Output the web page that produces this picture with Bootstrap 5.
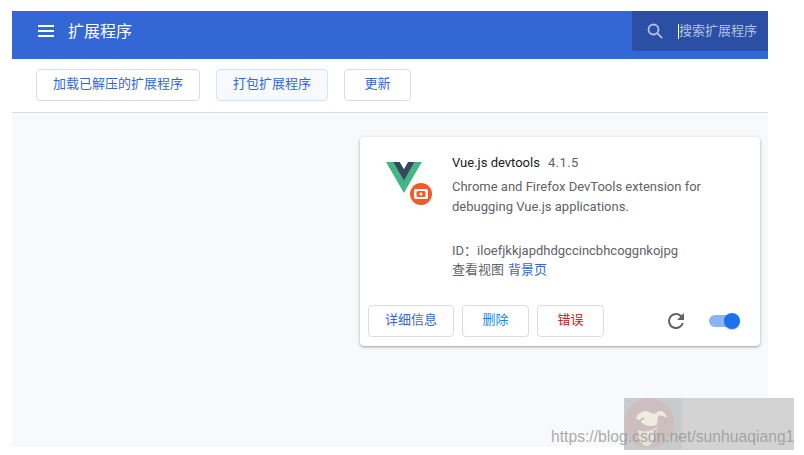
<!DOCTYPE html>
<html lang="zh-CN">
<head>
<meta charset="utf-8">
<title>扩展程序</title>
<link href="https://cdn.jsdelivr.net/npm/bootstrap@5.3.0/dist/css/bootstrap.min.css" rel="stylesheet">
<style>
html,body{height:455px;overflow:hidden;background:#fff;}
body{font-family:Roboto,"Noto Sans CJK SC",sans-serif;font-size:13px;position:relative;padding:11px 36px 8px 12px;color:#5f6368;}
.ext-window{height:436px;background:#f8f9fa;}
.ext-head{height:48px;background:#3367d6;color:#fff;flex:none;}
.ext-burger{margin:0 14px 8px 26px;width:16px;height:12px;flex:none;}
.ext-title{font-size:16px;line-height:20px;margin-bottom:6px;}
.ext-search{width:136px;height:40px;background:#2a4fa4;border-bottom-left-radius:2px;color:#b3c3e4;padding-left:14px;}
.ext-caret{width:1px;height:15px;background:#fff;margin-left:14px;flex:none;}
.ext-tools{height:54px;background:#fff;border-bottom:1px solid #dadce0;padding:0 0 1px 24px;gap:16px;flex:none;}
.ext-btn{height:32px;border:1px solid #dadce0;border-radius:4px;background:#fff;color:#3367d6;font-size:13px;line-height:28px;padding:0 0 2px;text-align:center;}
.ext-wide{width:164px;}
.ext-pack{width:112px;background:#f6f9fe;border-color:#d2e3fc;}
.ext-upd{width:67px;}
.ext-main{flex:1;padding:24px 8px 0 348px;}
.ext-card{width:400px;height:209px;background:#fff;border-radius:4px;box-shadow:0 1px 2px rgba(60,64,67,.3),0 1px 3px 1px rgba(60,64,67,.15);}
.ext-top{padding:16px 20px 0 20px;height:168px;}
.ext-logo{width:72px;flex:none;}
.ext-name{color:#202124;line-height:20px;}
.ext-ver{margin-left:8px;color:#5f6368;letter-spacing:.4px;}
.ext-desc{line-height:20px;margin-top:4px;height:40px;width:270px;}
.ext-id{margin-top:24px;line-height:20px;}
.ext-links{line-height:20px;margin-top:-1px;}
.ext-links span+span{color:#3367d6;margin-left:4px;}
.ext-foot{padding-left:8px;gap:8px;height:32px;}
.ext-detail{width:86px;}
.ext-del{width:67px;color:#1a88e8;}
.ext-err{width:67px;color:#c5221f;}
.ext-reload{margin-left:auto;margin-right:13px;width:24px;height:24px;flex:none;}
.ext-toggle{width:31px;height:16px;margin-right:20px;position:relative;flex:none;}
.ext-track{position:absolute;left:0;top:2px;width:28px;height:12px;border-radius:6px;background:#8ab4f8;}
.ext-knob{position:absolute;right:0;top:0;width:16px;height:16px;border-radius:50%;background:#1a73e8;box-shadow:0 1px 1px rgba(60,64,67,.3);}
.ext-mark{position:absolute;left:624px;top:398px;width:170px;height:52px;background:#d3d3d3;}
.ext-mark-left{position:absolute;left:0;top:0;width:58px;height:52px;background:#c8cacb;overflow:hidden;}
.ext-mark-url{position:absolute;left:551px;top:427px;font-family:"Liberation Sans",sans-serif;font-size:15.700px;line-height:20px;color:rgba(150,150,150,.8);white-space:nowrap;}
</style>
</head>
<body>
<div class="ext-window d-flex flex-column">
  <header class="ext-head d-flex align-items-center">
    <svg class="ext-burger" viewBox="0 0 16 12"><path d="M0 0h16v2H0zM0 5h16v2H0zM0 10h16v2H0z" fill="#fff"/></svg>
    <div class="ext-title">扩展程序</div>
    <div class="ext-search ms-auto align-self-start d-flex align-items-center">
      <svg width="18" height="18" viewBox="0 0 18 18" fill="none" stroke="#b3c3e4" stroke-width="1.800"><circle cx="7.500" cy="7.500" r="5"/><path d="M11.200 11.200l5 5"/></svg>
      <span class="ext-caret"></span><span>搜索扩展程序</span>
    </div>
  </header>
  <div class="ext-tools d-flex align-items-center">
    <button class="ext-btn ext-wide">加载已解压的扩展程序</button>
    <button class="ext-btn ext-pack">打包扩展程序</button>
    <button class="ext-btn ext-upd">更新</button>
  </div>
  <main class="ext-main">
    <div class="ext-card">
      <div class="ext-top d-flex">
        <div class="ext-logo">
          <svg width="56" height="56" viewBox="0 0 56 56" class="d-block">
            <g transform="translate(6 9) scale(.14)">
              <path d="M0 0l128 220.800L256 0h-51.200L128 132.480 50.560 0z" fill="#41b883"/>
              <path d="M50.560 0L128 133.120 204.800 0h-47.360L128 51.200 97.920 0z" fill="#35495e"/>
            </g>
            <circle cx="41" cy="41" r="11" fill="#f45a26"/>
            <rect x="34" y="36" width="14" height="10" rx="1.500" fill="#fff"/>
            <rect x="36.500" y="38" width="9" height="6" rx="1.500" fill="#f45a26"/>
            <circle cx="41" cy="41" r="1.500" fill="#fff"/>
          </svg>
        </div>
        <div>
          <div class="ext-name">Vue.js devtools<span class="ext-ver">4.1.5</span></div>
          <div class="ext-desc">Chrome and Firefox DevTools extension for debugging Vue.js applications.</div>
          <div class="ext-id">ID：iloefjkkjapdhdgccincbhcoggnkojpg</div>
          <div class="ext-links"><span>查看视图</span><span>背景页</span></div>
        </div>
      </div>
      <div class="ext-foot d-flex align-items-center">
        <button class="ext-btn ext-detail">详细信息</button>
        <button class="ext-btn ext-del">删除</button>
        <button class="ext-btn ext-err">错误</button>
        <svg class="ext-reload" viewBox="0 0 24 24"><path fill="#5f6368" d="M17.650 6.350A7.950 7.950 0 0 0 12 4a8 8 0 1 0 7.730 10h-2.080A6 6 0 1 1 12 6c1.660 0 3.140.690 4.220 1.780L13 11h7V4z"/></svg>
        <div class="ext-toggle"><span class="ext-track"></span><span class="ext-knob"></span></div>
      </div>
    </div>
  </main>
</div>
<div class="ext-mark">
  <div class="ext-mark-left">
    <svg width="58" height="52" viewBox="0 0 58 52">
      <circle cx="25" cy="25" r="25" fill="#cdbfbf"/>
      <path d="M12 20c3-7 11-9 15-5 2 1 3 1 5 0 4-4 9-2 11 5-3-2-6-3-9-2l-1 8c-1 2-4 2-7 2-6 0-11-6-14-8z" fill="#f0ebe1"/>
      <path d="M14 32c5 2 12 2 19-3-1 10-5 19-10 19-6 0-9-8-9-16z" fill="#e8e3da"/>
      <path d="M14 28c0-3 2-6 6-8M42 27c0-3-1-5-4-7" stroke="#bdbdb6" stroke-width="1.500" fill="none"/>
    </svg>
  </div>
</div>
<div class="ext-mark-url">https://blog.csdn.net/sunhuaqiang1</div>
<script src="https://cdn.jsdelivr.net/npm/bootstrap@5.3.0/dist/js/bootstrap.bundle.min.js"></script>
</body>
</html>
